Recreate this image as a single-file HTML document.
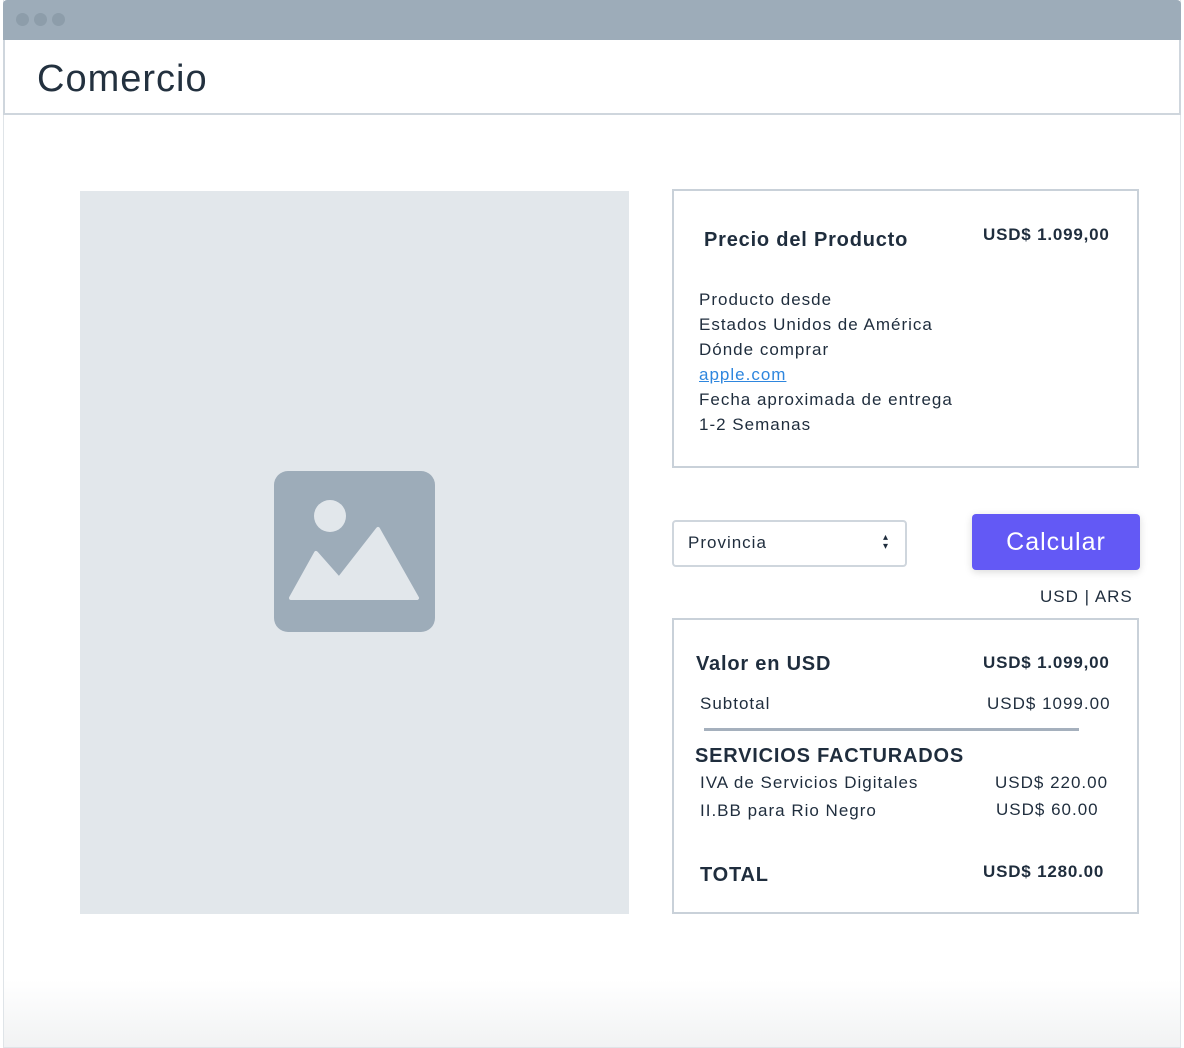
<!DOCTYPE html>
<html><head><meta charset="utf-8"><style>
*{margin:0;padding:0;box-sizing:border-box}
body{width:1184px;height:1048px;background:#fff;font-family:"Liberation Sans",sans-serif;color:#1f2d3d;position:relative;overflow:hidden}
.a{position:absolute}
.frame{left:3px;top:0;width:1178px;height:1048px;border:1px solid #dfe4e8;border-top:none;background:linear-gradient(#fff 980px,#f1f2f3 1048px)}
.bar{left:3px;top:0;width:1178px;height:40px;background:#9dacb9;border-radius:4px 4px 0 0}
.dot{top:13px;width:13px;height:13px;border-radius:50%;background:#8d9daa}
.head{left:3px;top:40px;width:1178px;height:75px;border:2px solid #cfd6dd;border-top:none;background:#fff}
.box{border:2px solid #c9d1d9;background:#fff}
.t{font-size:17px;white-space:nowrap;letter-spacing:1px}
.b{font-weight:bold;letter-spacing:0.8px}
</style></head><body>
<div class="a frame"></div>
<div class="a bar"></div>
<div class="a dot" style="left:16px"></div><div class="a dot" style="left:34px"></div><div class="a dot" style="left:52px"></div>
<div class="a head"></div>
<div class="a" style="left:37px;top:58px;font-size:38px;color:#23313f;letter-spacing:1px">Comercio</div>

<div class="a" style="left:80px;top:191px;width:549px;height:723px;background:#e2e7eb"></div>
<div class="a" style="left:274px;top:471px;width:161px;height:161px;background:#9dacb9;border-radius:14px"></div>
<svg class="a" style="left:274px;top:471px" width="161" height="161"><circle cx="56" cy="45" r="16" fill="#e2e7eb"/><path d="M17 127 L42 82 L65 108 L104 58 L143 127 Z" fill="#e2e7eb" stroke="#e2e7eb" stroke-linejoin="round" stroke-width="4"/></svg>

<div class="a box" style="left:672px;top:189px;width:467px;height:279px"></div>
<div class="a t b" style="left:704px;top:229px;font-size:20px">Precio del Producto</div>
<div class="a t b" style="left:983px;top:225px">USD$ 1.099,00</div>
<div class="a t" style="left:699px;top:287px;line-height:25px">Producto desde<br>Estados Unidos de América<br>Dónde comprar<br><span style="color:#2e86de;text-decoration:underline">apple.com</span><br>Fecha aproximada de entrega<br>1-2 Semanas</div>

<div class="a" style="left:672px;top:520px;width:235px;height:47px;border:2px solid #cfd6dd;border-radius:4px"></div>
<div class="a t" style="left:688px;top:533px">Provincia</div>
<div class="a" style="left:883px;top:533px;font-size:10px;line-height:9px">▴<br>▾</div>
<div class="a" style="left:972px;top:514px;width:168px;height:56px;background:#6359f5;border-radius:4px;box-shadow:0 2px 8px rgba(0,0,0,.15);color:#fff;font-size:25px;letter-spacing:1px;text-align:center;line-height:56px">Calcular</div>
<div class="a t" style="left:1040px;top:587px">USD | ARS</div>

<div class="a box" style="left:672px;top:618px;width:467px;height:296px"></div>
<div class="a t b" style="left:696px;top:653px;font-size:20px">Valor en USD</div>
<div class="a t b" style="left:983px;top:653px">USD$ 1.099,00</div>
<div class="a t" style="left:700px;top:694px">Subtotal</div>
<div class="a t" style="left:987px;top:694px">USD$ 1099.00</div>
<div class="a" style="left:704px;top:728px;width:375px;height:3px;background:#a5b0bd"></div>
<div class="a t b" style="left:695px;top:745px;font-size:20px">SERVICIOS FACTURADOS</div>
<div class="a t" style="left:700px;top:773px">IVA de Servicios Digitales</div>
<div class="a t" style="left:995px;top:773px">USD$ 220.00</div>
<div class="a t" style="left:700px;top:801px">II.BB para Rio Negro</div>
<div class="a t" style="left:996px;top:800px">USD$ 60.00</div>
<div class="a t b" style="left:700px;top:864px;font-size:20px">TOTAL</div>
<div class="a t b" style="left:983px;top:862px">USD$ 1280.00</div>
</body></html>
